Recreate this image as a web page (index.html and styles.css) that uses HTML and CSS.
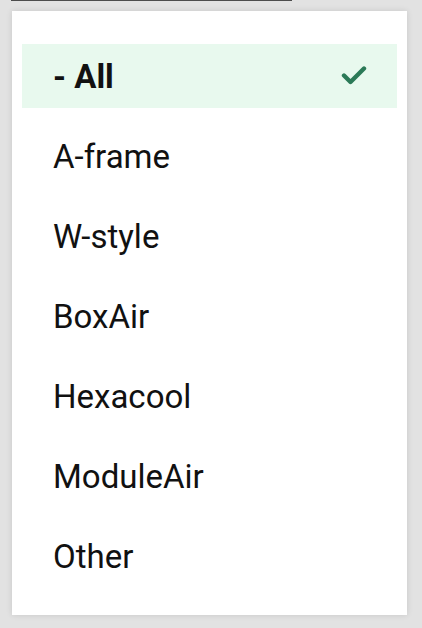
FILE: index.html
```html
<!DOCTYPE html>
<html>
<head>
<meta charset="utf-8">
<link rel="stylesheet" href="styles.css">
</head>
<body>
<div class="field-line"></div>
<div class="menu">
  <ul class="options">
    <li class="option selected">
      <span class="label">- All</span>
      <svg class="check" width="26" height="22" viewBox="0 0 26 22"><polyline points="3,10.5 9.5,17 23,3.5" fill="none" stroke="#2b7a57" stroke-width="4.4" stroke-linecap="round" stroke-linejoin="round"/></svg>
    </li>
    <li class="option"><span class="label">A-frame</span></li>
    <li class="option"><span class="label">W-style</span></li>
    <li class="option"><span class="label">BoxAir</span></li>
    <li class="option"><span class="label">Hexacool</span></li>
    <li class="option"><span class="label">ModuleAir</span></li>
    <li class="option"><span class="label">Other</span></li>
  </ul>
</div>
</body>
</html>
```

FILE: styles.css
```css
html, body {
  margin: 0;
  padding: 0;
}
body {
  background: #e2e2e2;
  width: 422px;
  height: 628px;
  overflow: hidden;
  font-family: Roboto, "Noto Sans", sans-serif;
}
.field-line {
  margin-left: 11px;
  width: 281px;
  height: 1px;
  background: #4d4d4d;
}
.menu {
  margin: 10px 0 0 12px;
  width: 395px;
  height: 604px;
  box-sizing: border-box;
  background: #fff;
  box-shadow: 0 0 6px rgba(0, 0, 0, 0.12);
  padding: 25px 10px 19px 10px;
}
.options {
  list-style: none;
  margin: 0;
  padding: 0;
}
.option {
  height: 80px;
  display: flex;
  align-items: center;
  justify-content: space-between;
  padding: 0 30px 0 31px;
  box-sizing: border-box;
  font-size: 33px;
  color: #111;
}
.option.selected {
  height: 64px;
  margin: 8px 0;
  background: #e8f9ee;
  font-weight: 700;
}
.check {
  display: block;
}
```
